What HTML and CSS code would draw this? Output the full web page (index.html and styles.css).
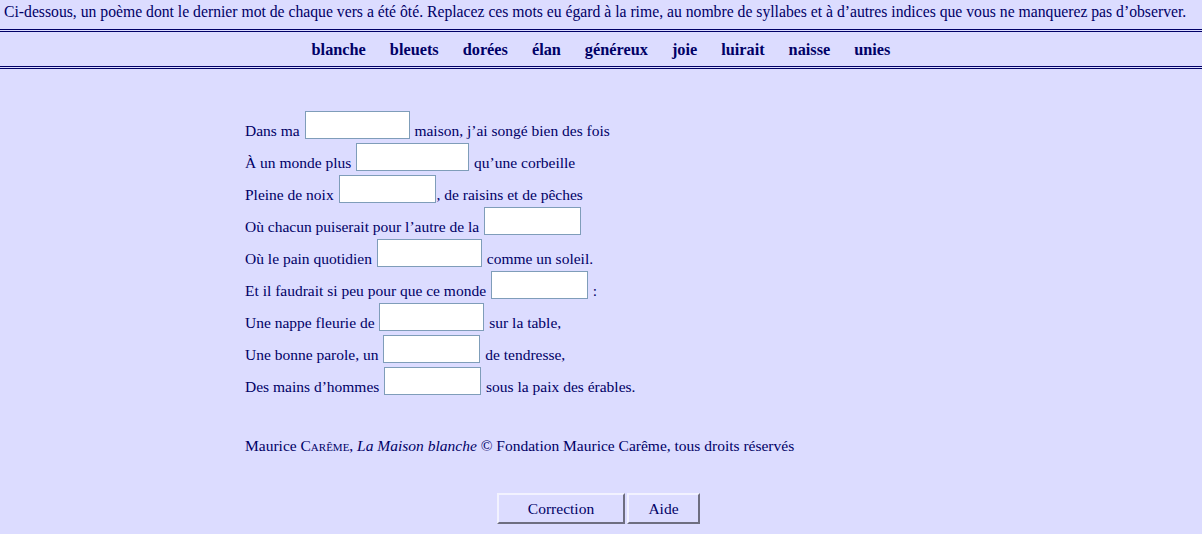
FILE: index.html
```html
<!DOCTYPE html>
<html lang="fr">
<head>
<meta charset="utf-8">
<title>Poème à trous</title>
<link rel="stylesheet" href="styles.css">
</head>
<body>
<p class="intro">Ci-dessous, un poème dont le dernier mot de chaque vers a été ôté. Replacez ces mots eu égard à la rime, au nombre de syllabes et à d’autres indices que vous ne manquerez pas d’observer.</p>
<div class="words">
  <span>blanche</span><span>bleuets</span><span>dorées</span><span>élan</span><span>généreux</span><span>joie</span><span>luirait</span><span>naisse</span><span>unies</span>
</div>
<div class="poem">
  <div class="verse">Dans ma <input class="w104" type="text"> maison, j’ai songé bien des fois</div>
  <div class="verse">À un monde plus <input class="w112" type="text"> qu’une corbeille</div>
  <div class="verse">Pleine de noix <input class="w96" type="text">, de raisins et de pêches</div>
  <div class="verse">Où chacun puiserait pour l’autre de la <input class="w96" type="text"></div>
  <div class="verse">Où le pain quotidien <input class="w104" type="text"> comme un soleil.</div>
  <div class="verse">Et il faudrait si peu pour que ce monde <input class="w96" type="text"> :</div>
  <div class="verse">Une nappe fleurie de <input class="w104" type="text"> sur la table,</div>
  <div class="verse">Une bonne parole, un <input class="w96" type="text"> de tendresse,</div>
  <div class="verse">Des mains d’hommes <input class="w96" type="text"> sous la paix des érables.</div>
  <p class="credit">Maurice <span class="sc">Carême</span>, <i>La Maison blanche</i> © Fondation Maurice Carême, tous droits réservés</p>
</div>
<div class="buttons">
  <button class="btn btn-correction" type="button">Correction</button>
  <button class="btn btn-aide" type="button">Aide</button>
</div>
</body>
</html>
```
FILE: styles.css
```css
html, body {
  margin: 0;
  padding: 0;
  background: #dcdcff;
}
body {
  font-family: "Liberation Serif", "Times New Roman", serif;
  font-size: 15.5px;
  color: #000066;
  height: 534px;
  overflow: hidden;
}
.intro {
  margin: 0;
  padding: 3px 4px 0 4px;
  height: 26px;
  line-height: 18px;
  font-size: 15.7px;
  white-space: nowrap;
}
.words {
  border-top: 3px double #000066;
  border-bottom: 3px double #000066;
  height: 33px;
  display: flex;
  justify-content: center;
  align-items: center;
  gap: 24px;
  font-weight: bold;
  font-size: 16.3px;
  padding-top: 1px;
  box-sizing: content-box;
}
.poem {
  width: 712px;
  margin: 46px auto 0 auto;
}
.verse {
  height: 32px;
  line-height: 32px;
  white-space: nowrap;
}
.verse input {
  box-sizing: border-box;
  height: 28px;
  margin: -4px 1px 0 1px;
  padding: 0 2px;
  border: 1px solid #7f9db9;
  background: #ffffff;
  font-family: inherit;
  font-size: 15px;
  vertical-align: top;
}
.w96 { width: 97px; }
.w104 { width: 105px; }
.w112 { width: 113px; }
.credit {
  margin: 33px 0 0 0;
  line-height: 20px;
}
.sc {
  font-variant: small-caps;
}
.buttons {
  display: flex;
  justify-content: center;
  gap: 2px;
  margin-top: 37px;
  padding-right: 5px;
}
.btn {
  box-sizing: border-box;
  height: 31px;
  background: #dcdcff;
  color: #000066;
  font-family: inherit;
  font-size: 15.5px;
  border-style: solid;
  border-width: 2px;
  border-color: #f2f2ff #6e6e80 #6e6e80 #f2f2ff;
  padding: 0;
}
.btn-correction { width: 128px; }
.btn-aide { width: 73px; }
```
